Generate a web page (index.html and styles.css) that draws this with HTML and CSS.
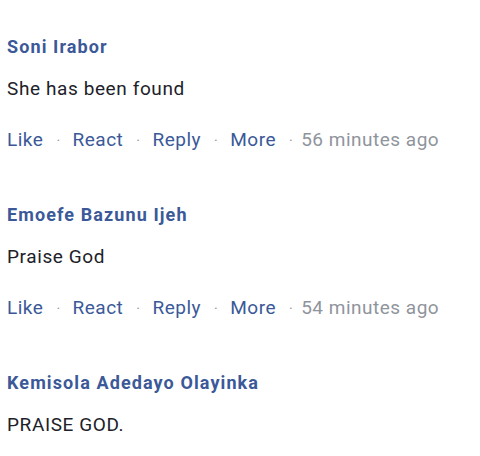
FILE: index.html
```html
<!DOCTYPE html>
<html>
<head>
<meta charset="utf-8">
<link rel="stylesheet" href="styles.css">
</head>
<body>
<div class="list">
  <div class="comment">
    <div class="name">Soni Irabor</div>
    <div class="text">She has been found</div>
    <div class="actions">
      <span class="link">Like</span><span class="dot">·</span><span class="link">React</span><span class="dot">·</span><span class="link">Reply</span><span class="dot">·</span><span class="link">More</span><span class="dot dot-last">·</span><span class="time">56 minutes ago</span>
    </div>
  </div>
  <div class="comment">
    <div class="name">Emoefe Bazunu Ijeh</div>
    <div class="text">Praise God</div>
    <div class="actions">
      <span class="link">Like</span><span class="dot">·</span><span class="link">React</span><span class="dot">·</span><span class="link">Reply</span><span class="dot">·</span><span class="link">More</span><span class="dot dot-last">·</span><span class="time">54 minutes ago</span>
    </div>
  </div>
  <div class="comment">
    <div class="name">Kemisola Adedayo Olayinka</div>
    <div class="text">PRAISE GOD.</div>
  </div>
</div>
</body>
</html>
```
FILE: styles.css
```css
html, body {
  margin: 0;
  padding: 0;
  background: #ffffff;
}
body {
  font-family: Roboto, "Noto Sans", sans-serif;
  width: 480px;
  height: 456px;
  overflow: hidden;
}
.list {
  padding: 35px 7px 0 7px;
  display: flex;
  flex-direction: column;
}
.comment {
  display: flex;
  flex-direction: column;
  height: 168px;
  flex-shrink: 0;
}
.comment:last-child {
  height: auto;
}
.name {
  font-size: 18px;
  font-weight: bold;
  letter-spacing: 1.1px;
  color: #3b5998;
  line-height: 24px;
}
.text {
  font-size: 19px;
  letter-spacing: 0.6px;
  color: #1d2129;
  line-height: 24px;
  margin-top: 18px;
}
.actions {
  display: flex;
  align-items: baseline;
  font-size: 19px;
  letter-spacing: 0.5px;
  line-height: 26px;
  margin-top: 26px;
}
.link {
  color: #3b5998;
}
.dot {
  color: #90949c;
  margin: 0 12px 0 13px;
  font-size: 14px;
}
.dot-last {
  margin-right: 8px;
}
.time {
  color: #90949c;
}
```
